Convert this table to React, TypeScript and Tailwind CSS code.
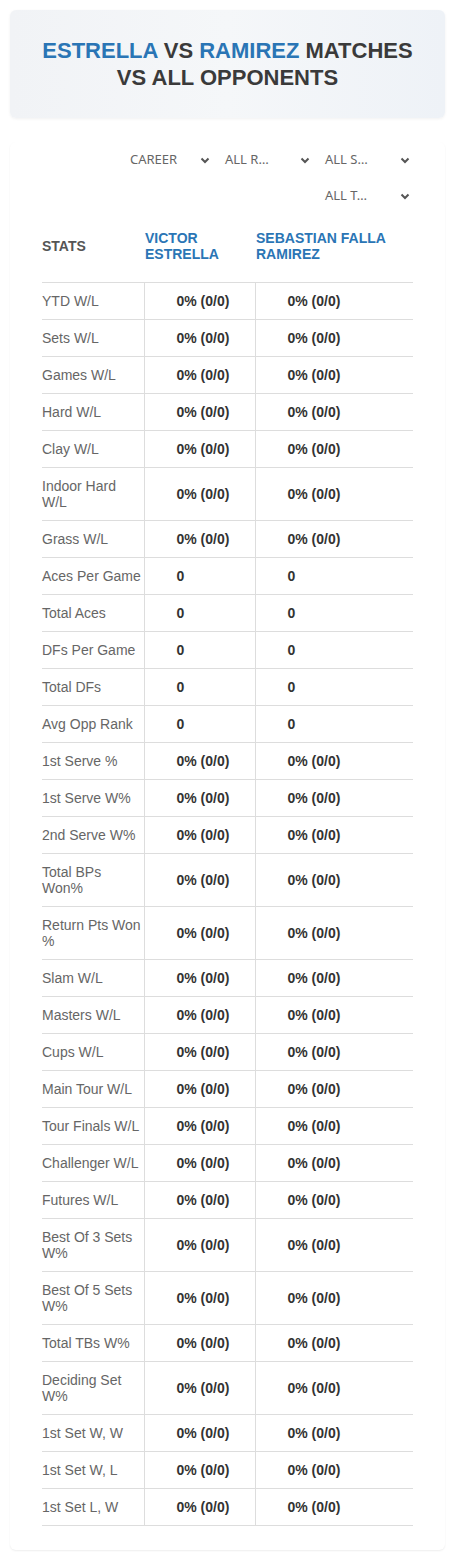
import React from "react";

type Row = { label: string; a: string; b: string };

const pct = "0% (0/0)";

const rows: Row[] = [
  { label: "YTD W/L", a: pct, b: pct },
  { label: "Sets W/L", a: pct, b: pct },
  { label: "Games W/L", a: pct, b: pct },
  { label: "Hard W/L", a: pct, b: pct },
  { label: "Clay W/L", a: pct, b: pct },
  { label: "Indoor Hard W/L", a: pct, b: pct },
  { label: "Grass W/L", a: pct, b: pct },
  { label: "Aces Per Game", a: "0", b: "0" },
  { label: "Total Aces", a: "0", b: "0" },
  { label: "DFs Per Game", a: "0", b: "0" },
  { label: "Total DFs", a: "0", b: "0" },
  { label: "Avg Opp Rank", a: "0", b: "0" },
  { label: "1st Serve %", a: pct, b: pct },
  { label: "1st Serve W%", a: pct, b: pct },
  { label: "2nd Serve W%", a: pct, b: pct },
  { label: "Total BPs Won%", a: pct, b: pct },
  { label: "Return Pts Won %", a: pct, b: pct },
  { label: "Slam W/L", a: pct, b: pct },
  { label: "Masters W/L", a: pct, b: pct },
  { label: "Cups W/L", a: pct, b: pct },
  { label: "Main Tour W/L", a: pct, b: pct },
  { label: "Tour Finals W/L", a: pct, b: pct },
  { label: "Challenger W/L", a: pct, b: pct },
  { label: "Futures W/L", a: pct, b: pct },
  { label: "Best Of 3 Sets W%", a: pct, b: pct },
  { label: "Best Of 5 Sets W%", a: pct, b: pct },
  { label: "Total TBs W%", a: pct, b: pct },
  { label: "Deciding Set W%", a: pct, b: pct },
  { label: "1st Set W, W", a: pct, b: pct },
  { label: "1st Set W, L", a: pct, b: pct },
  { label: "1st Set L, W", a: pct, b: pct },
];

function Chevron() {
  return (
    <svg width="10" height="7" viewBox="0 0 10 7" className="shrink-0">
      <path d="M1.5 1.5 L5 5 L8.5 1.5" fill="none" stroke="#555" strokeWidth="2" />
    </svg>
  );
}

function Select({ text, width }: { text: string; width: string }) {
  return (
    <div className={`${width} h-[36px] flex items-center justify-between pl-[12px] pr-[3px] text-[13px] text-[#666] font-[family-name:'Noto_Sans',sans-serif]`}>
      <span>{text}</span>
      <Chevron />
    </div>
  );
}

export default function App() {
  return (
    <div className="w-[455px] bg-white px-[10px] pt-[10px] pb-[8px] font-[family-name:'Liberation_Sans',Arial,sans-serif]">
      <div className="h-[108px] rounded-[6px] bg-gradient-to-r from-[#f1f3f6] via-[#f5f7f9] to-[#eef2f7] shadow-[0_1px_3px_rgba(0,0,0,0.06)] flex items-center justify-center px-4">
        <h1 className="text-center text-[22px] font-bold leading-[27px] text-[#3a3a3a] uppercase">
          <span className="text-[#2a75b5]">Estrella</span> vs{" "}
          <span className="text-[#2a75b5]">Ramirez</span> Matches
          <br />
          vs All Opponents
        </h1>
      </div>

      <div className="mt-[24px] rounded-[6px] shadow-[0_1px_2px_rgba(0,0,0,0.07)] px-[32px] pb-[24px]">
        <div className="flex flex-wrap justify-end">
          <Select text="CAREER" width="w-[95px]" />
          <Select text="ALL R…" width="w-[100px]" />
          <Select text="ALL S…" width="w-[100px]" />
          <Select text="ALL T…" width="w-[100px]" />
        </div>

        <table className="w-full mt-[6px] border-collapse text-[14px] leading-[16px]">
          <colgroup>
            <col className="w-[102px]" />
            <col className="w-[111px]" />
            <col />
          </colgroup>
          <thead>
            <tr className="border-b border-[#dddddd]">
              <th className="text-left align-middle pt-[10px] pb-[20px] text-[#555] font-bold uppercase">Stats</th>
              <th className="text-left align-middle pt-[10px] pb-[20px] pl-[1px] text-[#2a75b5] font-bold uppercase">
                Victor Estrella
              </th>
              <th className="text-left align-middle pt-[10px] pb-[20px] pl-[1px] text-[#2a75b5] font-bold uppercase">
                Sebastian Falla Ramirez
              </th>
            </tr>
          </thead>
          <tbody>
            {rows.map((r, i) => (
              <tr key={i} className="border-b border-[#dddddd]">
                <td className="py-[10px] pr-[2px] text-[#666] align-middle">{r.label}</td>
                <td className="py-[10px] pl-[32px] border-l border-[#dddddd] font-bold text-[#333] align-middle">{r.a}</td>
                <td className="py-[10px] pl-[32px] border-l border-[#dddddd] font-bold text-[#333] align-middle">{r.b}</td>
              </tr>
            ))}
          </tbody>
        </table>
      </div>
    </div>
  );
}
